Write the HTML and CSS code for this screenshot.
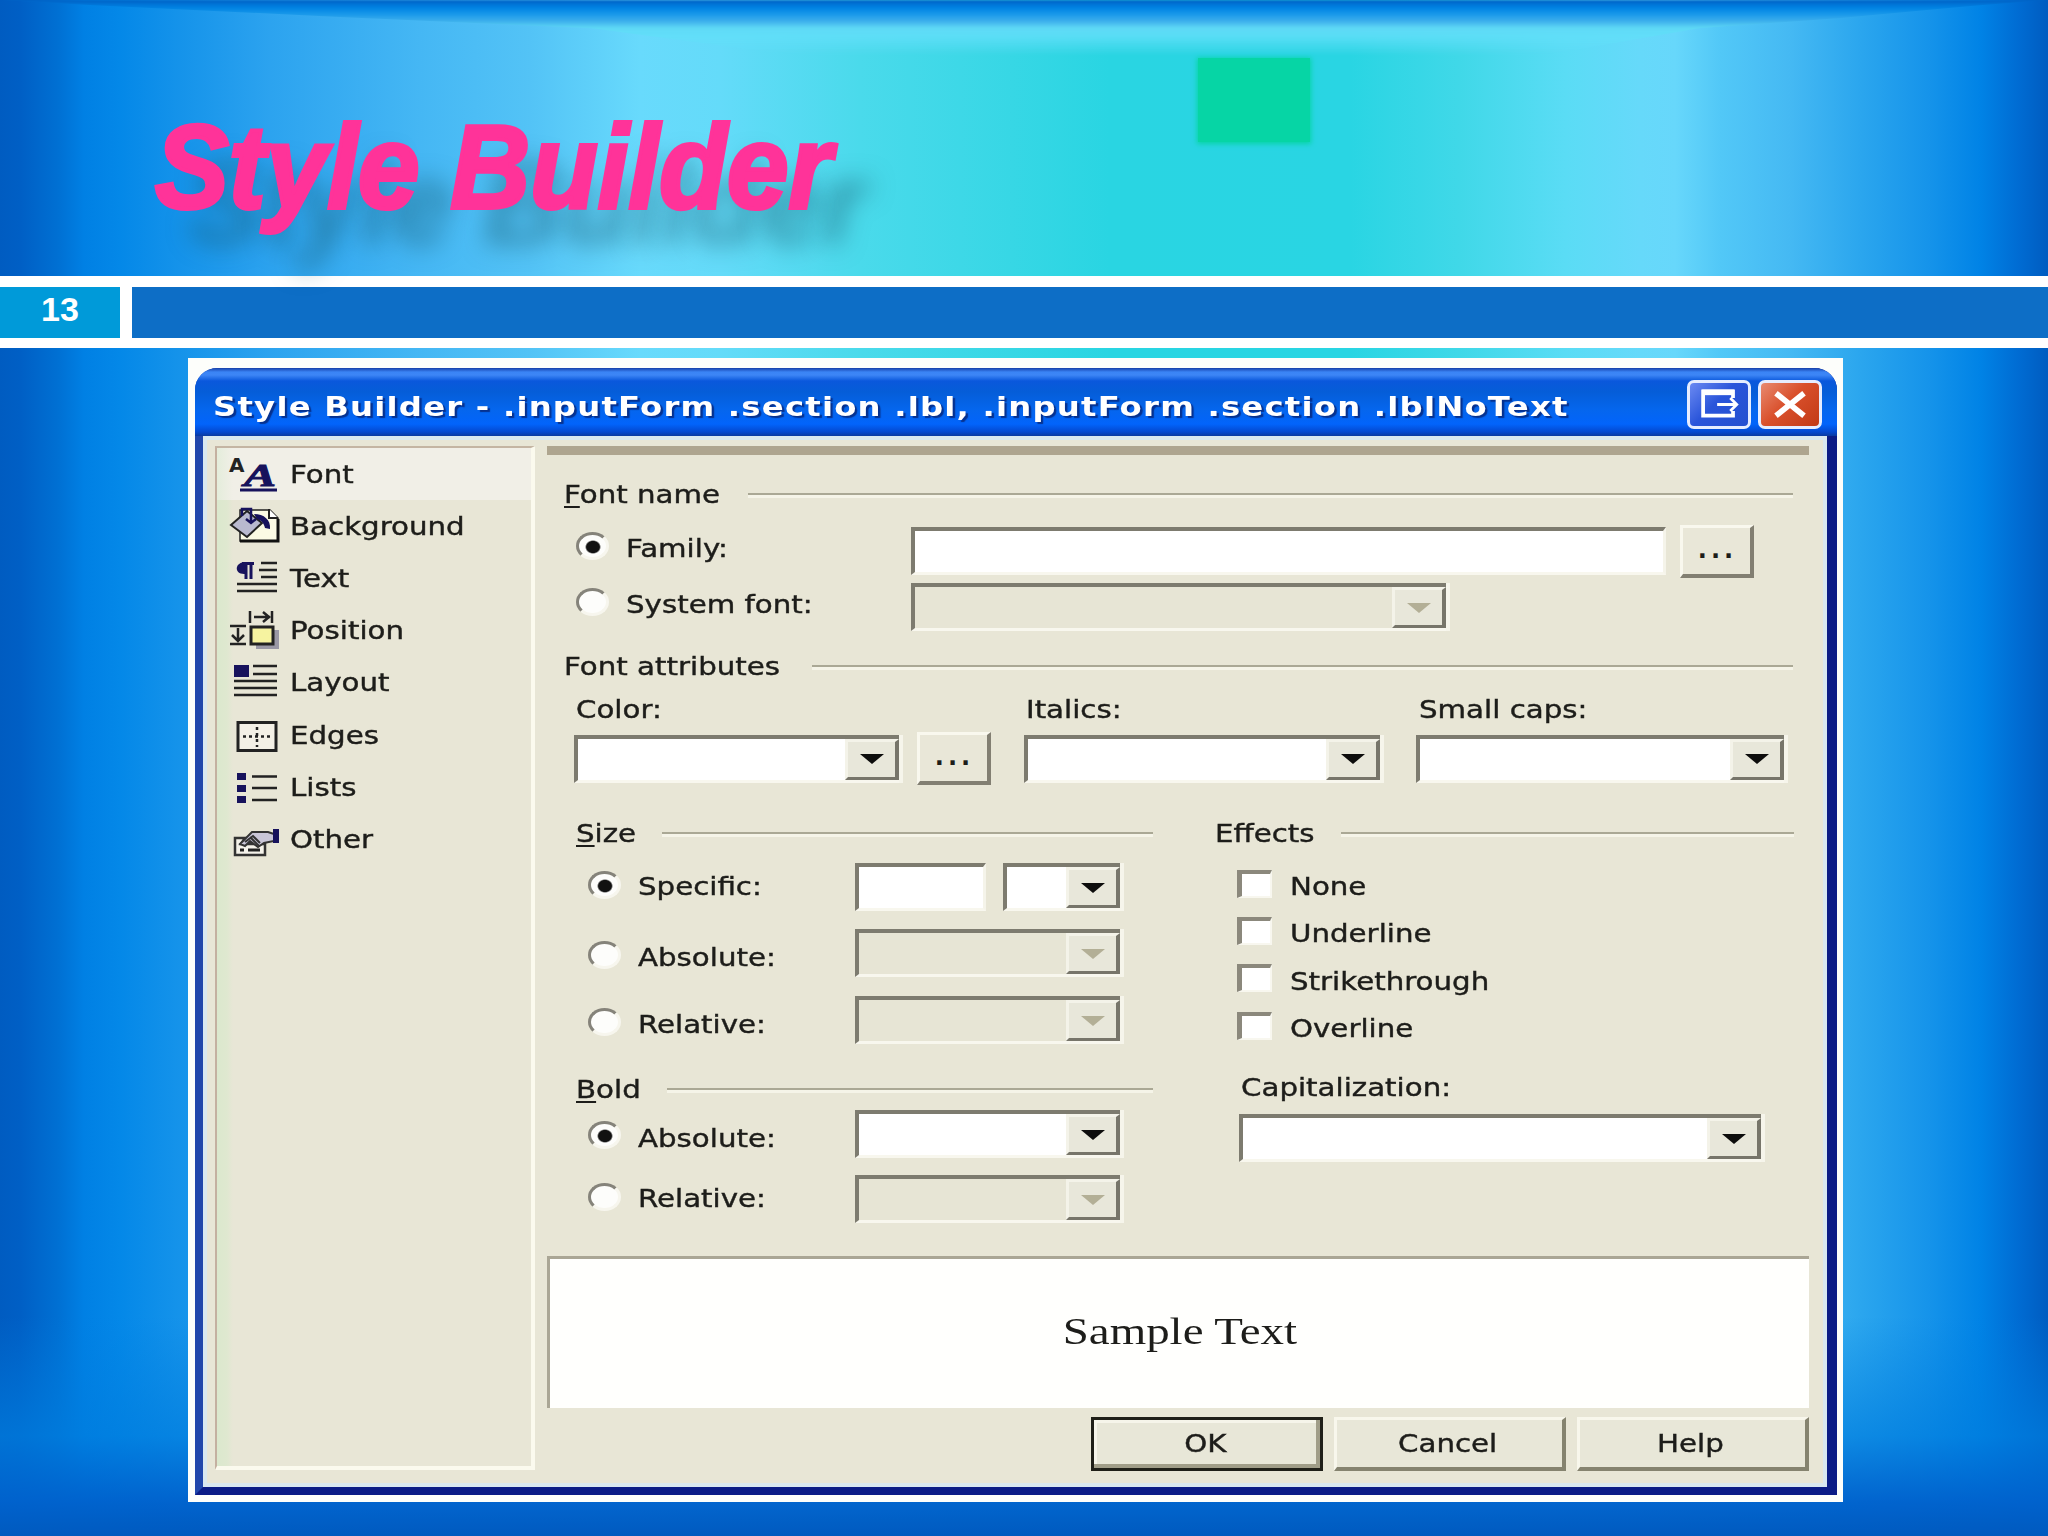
FILE: index.html
```html
<!DOCTYPE html>
<html lang="en">
<head>
  <meta charset="UTF-8">
  <title>Style Builder</title>
  <link rel="stylesheet" href="styles.css">
</head>
<body>
  <div class="slide">
    <div class="green-box"></div>
    <header class="slide-title">
      <h1>Style Builder</h1>
    </header>

    <div class="band">
      <div class="page-no">13</div>
      <div class="band-bar"></div>
    </div>

    <div class="frame">
      <div class="window">
        <div class="titlebar">
          <div class="caption"><span>Style Builder - .inputForm .section .lbl, .inputForm .section .lblNoText</span></div>
          <div class="win-btn restore">
            <svg viewBox="0 0 60 46"><path d="M45 16V9H13v26h32v-5" fill="none" stroke="#fff" stroke-width="4"/><path d="M12 10h34" stroke="#fff" stroke-width="6"/><path d="M28 23h20M42 16l7 7-7 7" fill="none" stroke="#fff" stroke-width="3"/></svg>
          </div>
          <div class="win-btn close">
            <svg viewBox="0 0 60 46"><path d="M15 11l30 24M45 11L15 35" stroke="#fff" stroke-width="6"/></svg>
          </div>
        </div>

        <div class="content">
          <nav class="sidebar">
            <div class="item selected">
              <svg viewBox="0 0 60 52"><text x="9" y="24" class="ic-small-a">A</text><text x="24" y="38" class="ic-big-a" textLength="32" lengthAdjust="spacingAndGlyphs">A</text><path d="M20 42h37" stroke="#17125c" stroke-width="3"/></svg>
              <span class="t">Font</span>
            </div>
            <div class="item">
              <svg viewBox="0 0 60 52"><path d="M20 10h30l8 8v23H20z" fill="#fbfae4" stroke="#222" stroke-width="1.5"/><path d="M58 19v22H20" fill="none" stroke="#111" stroke-width="3"/><path d="M49 9v9h9" fill="#fff" stroke="#222" stroke-width="2"/><path d="M11 25l16-14 15 12-15 14z" fill="#b9b9cf" stroke="#222" stroke-width="2"/><path d="M22 16V9h9v13M26 19l5 4 5-4" fill="none" stroke="#17125c" stroke-width="2.5"/><path d="M34 14c10 0 17 6 16 15l-5-1c-1-5-4-8-8-9z" fill="#17125c"/></svg>
              <span class="t">Background</span>
            </div>
            <div class="item">
              <svg viewBox="0 0 60 52"><path d="M26 10c-12 0-12 12-2 12h2z" fill="#17125c"/><path d="M22 11.500h12M26 11v16M31 11v16" stroke="#17125c" stroke-width="3"/><path d="M41 11h16M39 18h18M41 25h16M17 32h40M17 39h40" stroke="#222" stroke-width="2.500"/></svg>
              <span class="t">Text</span>
            </div>
            <div class="item">
              <svg viewBox="0 0 60 52"><path d="M36 26h23v19H36z" fill="#9a98a5"/><path d="M31 23h22v17H31z" fill="#f6f3a0" stroke="#222" stroke-width="3"/><path d="M30 7v12M52 7v12M34 13h16M43 8l6 5-6 5M10 22h16M10 40h16M18 24v13M12 31l6 6 6-6" fill="none" stroke="#222" stroke-width="2.500"/></svg>
              <span class="t">Position</span>
            </div>
            <div class="item">
              <svg viewBox="0 0 60 52"><path d="M14 9h15v12H14z" fill="#17125c"/><path d="M33 10h24M33 18h24M14 25h43M14 32h43M14 39h43" stroke="#222" stroke-width="2.500"/></svg>
              <span class="t">Layout</span>
            </div>
            <div class="item">
              <svg viewBox="0 0 60 52"><path d="M18 13.500h38v28H18z" fill="#f3f0e6" stroke="#222" stroke-width="3"/><path d="M23 27.500h29M37 18v20" stroke="#222" stroke-width="2.500" stroke-dasharray="3 3"/></svg>
              <span class="t">Edges</span>
            </div>
            <div class="item">
              <svg viewBox="0 0 60 52"><path d="M17 12h9v7h-9zM17 24h9v7h-9zM17 35h9v7h-9z" fill="#17125c"/><path d="M32 15.500h25M32 27h25M32 39h25" stroke="#222" stroke-width="2.500"/></svg>
              <span class="t">Lists</span>
            </div>
            <div class="item">
              <svg viewBox="0 0 60 52"><path d="M15 25h10l-4 6h24v11H15z" fill="#f4f2ea" stroke="#333" stroke-width="2.500"/><path d="M20 31l12-12h16l6 2v7l-10 2-6 4-8-6-5 5z" fill="#c9c6d8" stroke="#333" stroke-width="2"/><path d="M25 29l8-6 7 7M30 24l9 9" fill="none" stroke="#333" stroke-width="2"/><path d="M53 16h6v14h-6z" fill="#17125c"/><path d="M20 37h4M28 37h12" stroke="#222" stroke-width="3"/></svg>
              <span class="t">Other</span>
            </div>
          </nav>

          <main class="panel">
            <div class="top-rule"></div>
            <div class="legend l-name"><span class="t"><u>F</u>ont name</span><hr></div>
            <div class="row row-family">
              <i class="radio on"></i><span class="t">Family:</span><div class="field"></div><div class="more">...</div>
            </div>
            <div class="row row-system">
              <i class="radio"></i><span class="t">System font:</span><div class="combo off"><b></b></div>
            </div>
            <div class="legend l-attr"><span class="t">Font attributes</span><hr></div>
            <div class="attr-labels"><span class="t">Color:</span><span class="t">Italics:</span><span class="t">Small caps:</span></div>
            <div class="attr-fields">
              <div class="combo"><b></b></div><div class="more">...</div><div class="combo"><b></b></div><div class="combo"><b></b></div>
            </div>

            <div class="columns">
              <section class="left">
                <div class="legend l-size"><span class="t"><u>S</u>ize</span><hr></div>
                <div class="row opt specific"><i class="radio on"></i><span class="t">Specific:</span><div class="field"></div><div class="combo"><b></b></div></div>
                <div class="row opt abs"><i class="radio"></i><span class="t">Absolute:</span><div class="combo off"><b></b></div></div>
                <div class="row opt rel"><i class="radio"></i><span class="t">Relative:</span><div class="combo off"><b></b></div></div>
                <div class="legend l-bold"><span class="t"><u>B</u>old</span><hr></div>
                <div class="row opt bold-abs"><i class="radio on"></i><span class="t">Absolute:</span><div class="combo"><b></b></div></div>
                <div class="row opt bold-rel"><i class="radio"></i><span class="t">Relative:</span><div class="combo off"><b></b></div></div>
              </section>
              <section class="right">
                <div class="legend l-effects"><span class="t">Effects</span><hr></div>
                <div class="checks">
                  <div><i class="check"></i><span class="t">None</span></div>
                  <div><i class="check"></i><span class="t">Underline</span></div>
                  <div><i class="check"></i><span class="t">Strikethrough</span></div>
                  <div><i class="check"></i><span class="t">Overline</span></div>
                </div>
                <div class="cap-label"><span class="t">Capitalization:</span></div>
                <div class="combo cap"><b></b></div>
              </section>
            </div>

            <div class="preview"><span>Sample Text</span></div>
            <div class="buttons">
              <div class="btn default"><span class="t">OK</span></div>
              <div class="btn"><span class="t">Cancel</span></div>
              <div class="btn"><span class="t">Help</span></div>
            </div>
          </main>
        </div>
      </div>
    </div>
  </div>
</body>
</html>
```
FILE: styles.css
```css
* {
  box-sizing: border-box;
}

body {
  margin: 0;
  font-family: "DejaVu Sans", sans-serif;
  font-size: 24px;
  color: #1d1d1a;
}

.slide {
  position: relative;
  width: 2048px;
  height: 1536px;
  overflow: hidden;
  background:
    linear-gradient(to top, #005abf 0, rgba(0, 98, 205, .97) 34px, rgba(0, 125, 222, .7) 100px, rgba(0, 135, 232, 0) 220px),
    linear-gradient(to right, #005cc1 0, #005fc5 20px, #0070d3 58px, #0080e4 84px, #0488e8 120px, #1593ea 180px, #2ca3ef 270px, #45b7f4 420px, #53c3f6 530px, #68dafc 640px, #64dbf9 720px, #4adaeb 860px, #37d7e5 1010px, #29d5e2 1110px, #29d5e3 1350px, #40d8e8 1460px, #5adcf5 1565px, #66d9fa 1640px, #67d7fb 1675px, #52c8f7 1720px, #45b9f3 1790px, #2ba6ee 1860px, #1593ea 1930px, #0083e6 1980px, #006bd2 2020px, #005cc0 2048px);
}

/* bevelled top edge */
.slide::before {
  content: "";
  position: absolute;
  inset: 0 0 auto 0;
  height: 56px;
  background: linear-gradient(#005cc0 0, #006fd2 3px, #0083e4 8px, #1898ea 14px, #3caeec 21px, #5fd9f6 28px, rgba(98, 223, 249, .85) 36px, rgba(80, 220, 240, 0) 56px);
  clip-path: polygon(0 0, 100% 0, 1970px 6px, 1840px 18px, 1700px 28px, 1540px 56px, 800px 56px, 590px 28px, 340px 17px, 90px 5px);
  filter: blur(1px);
}

.green-box {
  position: absolute;
  left: 1198px;
  top: 58px;
  width: 112px;
  height: 84px;
  background: #06d5a5;
  box-shadow: 0 1px 5px 1px #06d5a5;
}

.slide-title {
  height: 276px;
  padding: 97px 0 0 155px;
}

h1 {
  margin: 0;
  font: italic bold 119px/140px "Liberation Sans", Arial, sans-serif;
  white-space: nowrap;
  color: #ff3399;
  -webkit-text-stroke: 4px #ff3399;
  text-shadow: 36px 36px 24px rgba(20, 85, 105, .5);
  transform: scaleX(.93);
  transform-origin: left;
}

.band {
  display: flex;
  gap: 12px;
  height: 72px;
  padding: 11px 0 10px;
  background: #fff;
}

.page-no {
  width: 120px;
  background: #009ad9;
  color: #fff;
  text-align: center;
  font: bold 34px/44px "Liberation Sans", Arial, sans-serif;
}

.band-bar {
  flex: 1;
  background: #0d6ec6;
}

.frame {
  width: 1655px;
  height: 1144px;
  margin: 10px 0 0 188px;
  padding: 10px 6px 7px 7px;
  background: #fdfefb;
}

.window {
  height: 1127px;
  border: solid #0b1c86;
  border-width: 0 10px 8px 8px;
  border-left-color: #2147ab;
  border-radius: 22px 22px 0 0;
  background: #1243c0;
}

.titlebar {
  display: flex;
  height: 68px;
  margin: 0 -10px 0 -8px;
  padding: 12px 15px 0 18px;
  border-radius: 22px 22px 0 0;
  background: linear-gradient(#173fa8 0, #3a84f5 4px, #3d86f6 7px, #0a58dc 13px, #055dd8 24px, #0566ee 42px, #0264fb 56px, #0448cf 64px, #0a3aa0 68px);
}

.caption {
  flex: 1;
  font-size: 27px;
  font-weight: bold;
  line-height: 54px;
  letter-spacing: 1px;
  white-space: nowrap;
  color: #fff;
  text-shadow: 2px 2px 1px #06318f;
}

.caption span {
  display: inline-block;
  transform: scaleX(1.197);
  transform-origin: left;
}

.win-btn {
  width: 64px;
  height: 49px;
  border: 3px solid #e6edff;
  border-radius: 7px;
  margin-left: 7px;
}

.win-btn svg {
  display: block;
  width: 58px;
  height: 43px;
}

.restore {
  background: linear-gradient(135deg, #6b8af2, #2a55da 45%, #2450d0);
}

.close {
  background: linear-gradient(135deg, #e88a70, #d9502c 45%, #c23a16);
}

.content {
  display: flex;
  height: 1051px;
  padding: 10px 18px 0 12px;
  background: #e8e6d6;
  box-shadow: inset 0 0 0 4px #d9e8f0;
}

.t {
  display: inline-block;
  white-space: nowrap;
  -webkit-text-stroke: .4px #1d1d1a;
  transform: scaleX(1.22);
  transform-origin: left;
}

u {
  text-decoration-thickness: 2px;
  text-underline-offset: 3px;
}

.sidebar {
  width: 320px;
  height: 1024px;
  border: solid #fbfaee;
  border-width: 2px 4px 4px 2px;
  border-top-color: #c4b5a3;
  border-left-color: #c4b0a0;
  background: linear-gradient(to right, #dbe8cd 0, #dfe8d0 10px, #e8e6d6 16px);
}

.item {
  display: flex;
  align-items: center;
  height: 52.1px;
  padding-left: 3px;
}

.item svg {
  width: 60px;
  height: 52px;
  margin-right: 10px;
}

.item .t {
  padding-top: 2px;
}

.selected {
  background: linear-gradient(to right, #e4eddb 0, #f1efe7 16px);
}

.ic-small-a {
  font-weight: bold;
  font-size: 20px;
  fill: #222;
}

.ic-big-a {
  font: italic bold 32px "Liberation Serif", serif;
  fill: #17125c;
  stroke: #17125c;
}

.panel {
  width: 1262px;
  margin-left: 12px;
}

.top-rule {
  height: 9px;
  background: #aea58f;
}

.legend {
  display: grid;
  align-items: center;
  height: 40px;
}

hr {
  width: 100%;
  height: 5px;
  margin: 0;
  border: 0;
  border-top: 2px solid #aaa895;
  border-bottom: 3px solid #f5f4e8;
}

.l-name {
  grid-template-columns: 184px 1045px;
  margin: 20px 0 9px 17px;
}

.l-attr {
  grid-template-columns: 248px 981px;
  margin: 15px 0 7px 17px;
}

.l-size {
  grid-template-columns: 84px 1fr;
  margin-bottom: 9px;
}

.l-bold {
  grid-template-columns: 89px 1fr;
  margin: 27px 0 1px;
  height: 38px;
}

.l-size .t,
.l-bold .t,
.l-effects .t {
  margin-left: -2px;
}

.l-effects {
  grid-template-columns: 124px 1fr;
}

.row {
  display: grid;
  align-items: center;
}

.row-family {
  grid-template-columns: 50px 285px 755px 75px;
  height: 54px;
  padding-left: 29px;
}

.row-family .more {
  margin-left: 14px;
}

.row-family .t,
.row-system .t {
  margin-top: -5px;
}

.row-system {
  grid-template-columns: 50px 285px 535px;
  height: 50px;
  margin-top: 4px;
  padding-left: 29px;
}

.radio {
  width: 33px;
  height: 28px;
  margin-top: -11px;
  border: 3px solid;
  border-color: #85837a #f7f6ee #f7f6ee #85837a;
  border-radius: 50%;
  background: #fdfdfb;
}

.radio.on {
  background: radial-gradient(ellipse 8px 7px at 14px 12px, #111 80%, #fdfdfb 100%);
}

.field,
.combo {
  height: 48px;
  border: solid #7d7b6f;
  border-width: 4px 3px 3px 4px;
  border-right-color: #f5f4ea;
  border-bottom-color: #f8f7ee;
  background: #fff;
}

.combo {
  display: flex;
  justify-content: flex-end;
  border-width: 4px 0 3px 4px;
  box-shadow: 4px 0 0 #f6f5eb;
}

.combo.off {
  background: #e7e5d5;
}

.combo b {
  display: flex;
  align-items: center;
  justify-content: center;
  width: 54px;
  border: solid #77756a;
  border-width: 3px 4px 3px 3px;
  border-top-color: #f4f3e9;
  border-left-color: #f4f3e9;
  background: #e8e7da;
}

.combo b::after {
  content: "";
  border: solid transparent;
  border-width: 10px 12px 0;
  border-top-color: #0d0d0c;
}

.combo.off b::after {
  border-top-color: #b3af96;
}

.more {
  width: 74px;
  height: 53px;
  border: solid #827f72;
  border-width: 3px 4px 4px 3px;
  border-top-color: #f9f8ee;
  border-left-color: #f9f8ee;
  font-size: 24px;
  font-weight: bold;
  letter-spacing: 4px;
  line-height: 44px;
  text-indent: 2px;
  text-align: center;
  background: #e9e7d8;
}

.attr-labels {
  display: grid;
  grid-template-columns: 450px 393px 1fr;
  height: 32px;
  padding-left: 29px;
  line-height: 32px;
}

.attr-fields {
  display: grid;
  grid-template-columns: 325px 74px 356px 370px;
  column-gap: 18px;
  align-items: center;
  height: 52px;
  margin-top: 6px;
  padding-left: 27px;
}

.attr-fields .combo:nth-child(3) {
  margin-left: 15px;
  margin-right: -15px;
}

.attr-fields .combo:nth-child(4) {
  margin-left: 33px;
  margin-right: -31px;
}

.columns {
  display: grid;
  grid-template-columns: 575px 577px;
  column-gap: 64px;
  height: 442px;
  margin-top: 30px;
  padding-left: 31px;
}

.opt {
  grid-template-columns: 50px 217px 265px;
  height: 48px;
  padding-left: 10px;
}

.specific {
  grid-template-columns: 50px 217px 131px 117px;
}

.specific .combo {
  margin-left: 17px;
  margin-right: -17px;
}

.opt .radio {
  margin-top: -5px;
}

.abs {
  margin-top: 18px;
}

.rel {
  margin-top: 19px;
}

.abs .t,
.rel .t,
.bold-abs .t {
  padding-top: 9px;
}

.abs .radio,
.rel .radio {
  margin-top: 3px;
}

.bold-abs .radio {
  margin-top: 1px;
}

.bold-rel {
  margin-top: 17px;
}

.right .l-effects {
  margin-bottom: 6px;
}

.checks div {
  display: flex;
  align-items: center;
  height: 47.3px;
  padding-left: 20px;
}

.checks .t {
  padding-top: 7px;
}

.check {
  width: 35px;
  height: 28px;
  margin-right: 18px;
  border: solid #8b887c;
  border-width: 4px 2px 2px 5px;
  border-right-color: #f8f7ef;
  border-bottom-color: #f8f7ef;
  background: #fff;
}

.cap-label {
  height: 32px;
  margin-top: 23px;
  padding-left: 24px;
  line-height: 32px;
}

.cap {
  width: 522px;
  margin: 10px 0 0 22px;
}

.preview {
  display: flex;
  align-items: center;
  justify-content: center;
  height: 152px;
  padding-bottom: 5px;
  border: solid #aaa695;
  border-width: 3px 0 0 3px;
  background: #fffffd;
  font: 38px "Liberation Serif", serif;
}

.preview span {
  transform: scaleX(1.235);
}

.buttons {
  display: flex;
  justify-content: flex-end;
  gap: 11px;
  margin-top: 9px;
}

.btn {
  width: 232px;
  height: 54px;
  border: solid #85836f;
  border-width: 3px 4px 4px 3px;
  border-top-color: #f8f7ec;
  border-left-color: #f8f7ec;
  text-align: center;
  line-height: 48px;
  background: #e8e7d8;
}

.btn .t {
  margin-left: -4px;
  transform-origin: center;
}

.btn.default {
  border: 3px solid #1f1f18;
  box-shadow: inset -4px -4px 0 #a09d88, inset 3px 3px 0 #f6f5ea;
}
```
